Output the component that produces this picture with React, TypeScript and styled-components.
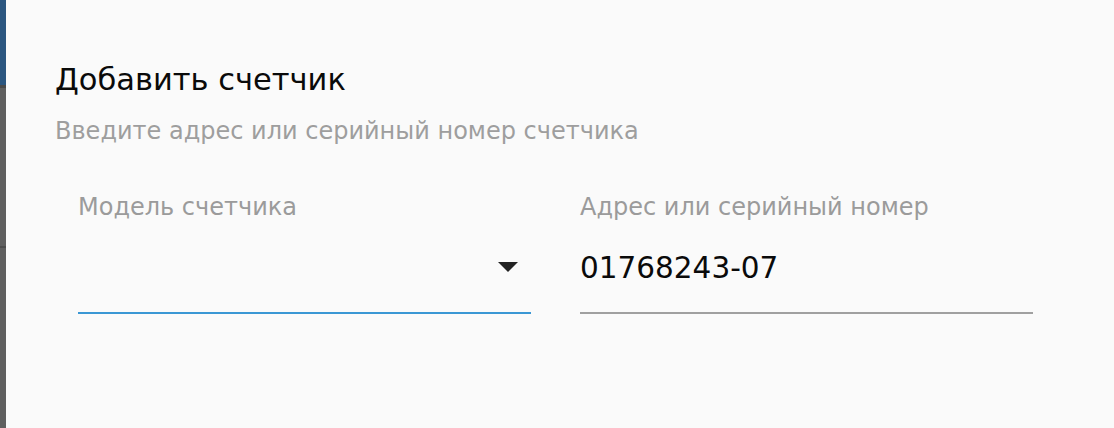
import styled, { createGlobalStyle } from "styled-components";

const GlobalStyle = createGlobalStyle`
  html, body {
    margin: 0;
    padding: 0;
    width: 1114px;
    height: 428px;
    overflow: hidden;
    font-family: "DejaVu Sans", "Open Sans", sans-serif;
  }
`;

const Screen = styled.div`
  display: flex;
  width: 1114px;
  height: 428px;
`;

const Backdrop = styled.div`
  width: 6px;
  flex-shrink: 0;
  display: flex;
  flex-direction: column;
`;

const BackdropBand = styled.div<{ $color: string; $size: number }>`
  height: ${(p) => p.$size}px;
  background: ${(p) => p.$color};
  flex-shrink: 0;
`;

const Dialog = styled.div`
  flex: 1;
  background: #fafafa;
  padding: 60px 49px 0 49px;
`;

const Title = styled.h2`
  margin: 0;
  font-size: 30.5px;
  font-weight: 400;
  line-height: 40px;
  color: #0a0a0a;
`;

const Subtitle = styled.p`
  margin: 16px 0 0;
  font-size: 24px;
  line-height: 30px;
  color: #9e9e9e;
`;

const Fields = styled.div`
  display: grid;
  grid-template-columns: 453px 453px;
  column-gap: 49px;
  padding: 0 23px;
  margin-top: 46px;
`;

const Field = styled.div`
  display: flex;
  flex-direction: column;
`;

const Label = styled.label`
  font-size: 24px;
  line-height: 30px;
  color: #9b9b9b;
`;

const Control = styled.div<{ $focused?: boolean }>`
  display: flex;
  align-items: center;
  height: 46px;
  margin-top: 23px;
  padding-bottom: 21px;
  border-bottom: ${(p) => (p.$focused ? "2px solid #3a97d4" : "2px solid #a0a0a0")};
`;

const Value = styled.span`
  flex: 1;
  font-size: 29.5px;
  line-height: 46px;
  color: #0a0a0a;
`;

const Arrow = styled.svg`
  width: 20px;
  height: 10px;
  margin: 0 13px 2px 0;
`;

export default function App() {
  return (
    <>
      <GlobalStyle />
      <Screen>
        <Backdrop>
          <BackdropBand $color="#2b5680" $size={85} />
          <BackdropBand $color="#4a4a4a" $size={3} />
          <BackdropBand $color="#5f5f5f" $size={158} />
          <BackdropBand $color="#4d4d4d" $size={2} />
          <BackdropBand $color="#5f5f5f" $size={180} />
        </Backdrop>
        <Dialog>
          <Title>Добавить счетчик</Title>
          <Subtitle>Введите адрес или серийный номер счетчика</Subtitle>
          <Fields>
            <Field>
              <Label>Модель счетчика</Label>
              <Control $focused>
                <Value />
                <Arrow viewBox="0 0 20 10">
                  <path d="M0 0h20L10 10z" fill="#222" />
                </Arrow>
              </Control>
            </Field>
            <Field>
              <Label>Адрес или серийный номер</Label>
              <Control>
                <Value>01768243-07</Value>
              </Control>
            </Field>
          </Fields>
        </Dialog>
      </Screen>
    </>
  );
}
